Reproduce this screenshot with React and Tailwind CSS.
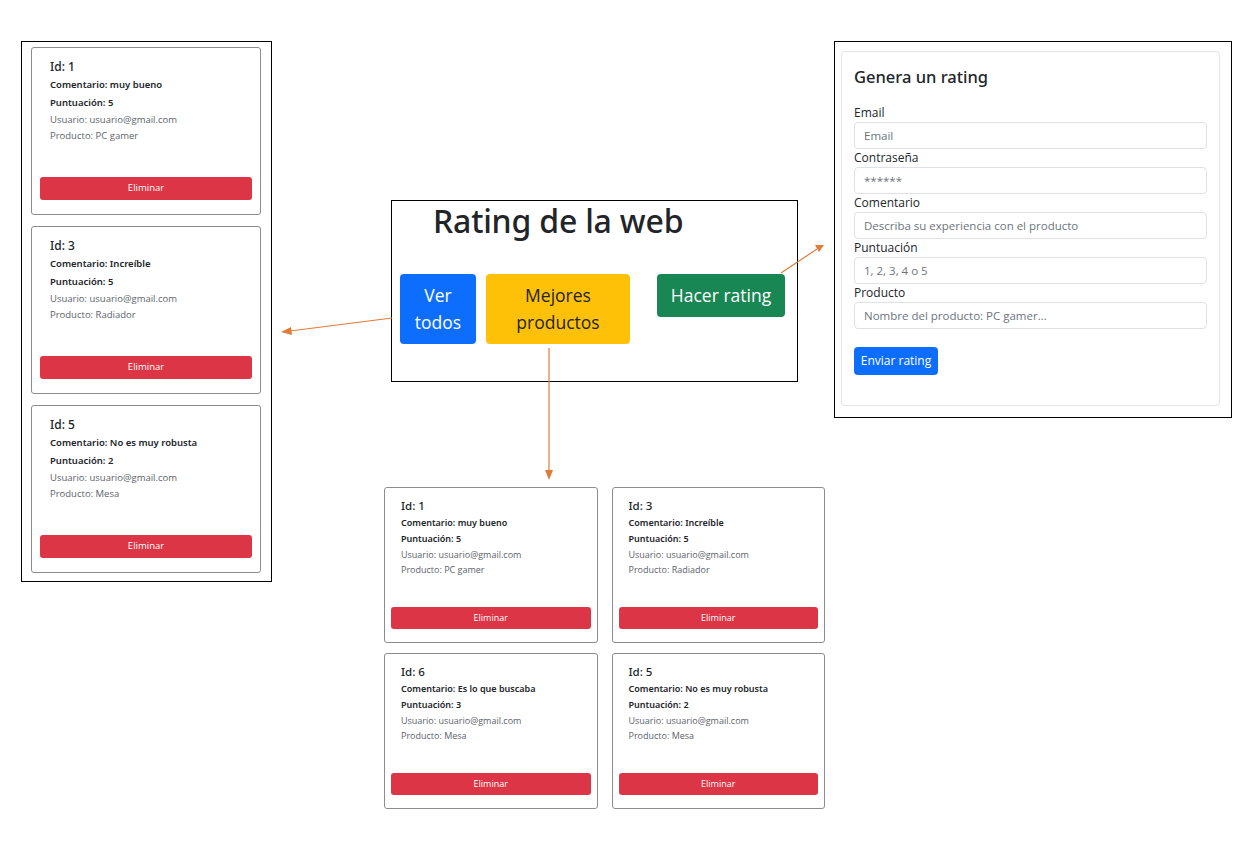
import React from 'react';

const leftRatings = [
  { id: 1, comentario: 'muy bueno', puntuacion: 5, producto: 'PC gamer' },
  { id: 3, comentario: 'Increíble', puntuacion: 5, producto: 'Radiador' },
  { id: 5, comentario: 'No es muy robusta', puntuacion: 2, producto: 'Mesa' },
];

const bestRatings = [
  { id: 1, comentario: 'muy bueno', puntuacion: 5, producto: 'PC gamer' },
  { id: 3, comentario: 'Increíble', puntuacion: 5, producto: 'Radiador' },
  { id: 6, comentario: 'Es lo que buscaba', puntuacion: 3, producto: 'Mesa' },
  { id: 5, comentario: 'No es muy robusta', puntuacion: 2, producto: 'Mesa' },
];

const noto = { fontFamily: '"Noto Sans", "Open Sans", sans-serif' };

function RatingCardLarge({ r }) {
  return (
    <div className="w-[230px] h-[168px] border border-[#8c8c8c] rounded-[3px] bg-white flex flex-col justify-between pb-[14px]">
      <div className="pt-[10px] pl-[18px] text-[#212529]">
        <div className="h-[18px] leading-[18px] text-[12px] font-medium" style={noto}>Id: {r.id}</div>
        <div className="h-[18px] leading-[18px] text-[9.5px] font-semibold" style={noto}>Comentario: {r.comentario}</div>
        <div className="h-[17px] leading-[17px] text-[9.5px] font-semibold" style={noto}>Puntuación: {r.puntuacion}</div>
        <div className="h-[17px] leading-[17px] text-[9.5px] text-[#5c636a]">Usuario: usuario@gmail.com</div>
        <div className="h-[15px] leading-[15px] text-[9.5px] text-[#5c636a]">Producto: {r.producto}</div>
      </div>
      <div className="px-[8px]">
        <div className="h-[23px] rounded-[3px] bg-[#dc3545] text-white text-[9.5px] flex items-center justify-center">Eliminar</div>
      </div>
    </div>
  );
}

function RatingCardSmall({ r }) {
  return (
    <div className="h-[156px] border border-[#8c8c8c] rounded-[3px] bg-white flex flex-col justify-between pb-[13px]">
      <div className="pt-[9px] pl-[16px] text-[#212529]">
        <div className="h-[18px] leading-[18px] text-[11.5px] font-medium" style={noto}>Id: {r.id}</div>
        <div className="h-[16px] leading-[16px] text-[9px] font-semibold" style={noto}>Comentario: {r.comentario}</div>
        <div className="h-[15px] leading-[15px] text-[9px] font-semibold" style={noto}>Puntuación: {r.puntuacion}</div>
        <div className="h-[17px] leading-[17px] text-[9px] text-[#5c636a]">Usuario: usuario@gmail.com</div>
        <div className="h-[14px] leading-[14px] text-[9px] text-[#5c636a]">Producto: {r.producto}</div>
      </div>
      <div className="px-[6px]">
        <div className="h-[22px] rounded-[3px] bg-[#dc3545] text-white text-[9px] flex items-center justify-center">Eliminar</div>
      </div>
    </div>
  );
}

function Field({ label, placeholder }) {
  return (
    <div>
      <div className="h-[18px] leading-[18px] text-[12px] text-[#212529]">{label}</div>
      <div className="h-[27px] border border-[#dee2e6] rounded-[4px] pl-[9px] flex items-center text-[11.5px] text-[#6c757d]">{placeholder}</div>
    </div>
  );
}

function Arrows() {
  const c = '#e07b39';
  return (
    <svg className="absolute inset-0 pointer-events-none" width="1255" height="842">
      <line x1="392" y1="318" x2="290" y2="331" stroke={c} strokeWidth="1.2" />
      <polygon points="281,332 291,327 292,335" fill={c} />
      <line x1="549" y1="348" x2="549" y2="471" stroke={c} strokeWidth="1.2" />
      <polygon points="549,480 545,470 553,470" fill={c} />
      <line x1="781" y1="273" x2="817" y2="249" stroke={c} strokeWidth="1.2" />
      <polygon points="824,245 815,245 819,252" fill={c} />
    </svg>
  );
}

export default function App() {
  return (
    <div className="relative w-[1255px] h-[842px] bg-white overflow-hidden" style={{ fontFamily: '"Open Sans", "Noto Sans", sans-serif' }}>
      {/* Ver todos */}
      <div className="absolute left-[21px] top-[41px] w-[251px] h-[541px] border border-black px-[9px] pt-[5px] flex flex-col gap-[11px]">
        {leftRatings.map((r) => (
          <RatingCardLarge key={r.id} r={r} />
        ))}
      </div>

      {/* Home */}
      <div className="absolute left-[391px] top-[200px] w-[407px] h-[182px] border border-black">
        <h1 className="pl-[41px] h-[41px] leading-[40px] text-[32px] font-medium tracking-[-0.2px] text-[#212529]" style={noto}>Rating de la web</h1>
        <div className="flex items-start mt-[32px] pl-[8px] text-[17.5px]">
          <div className="w-[76px] h-[70px] rounded-[4px] bg-[#0d6efd] text-white flex flex-col items-center justify-center leading-[27px] text-center">
            <span>Ver</span>
            <span>todos</span>
          </div>
          <div className="ml-[10px] w-[144px] h-[70px] rounded-[4px] bg-[#ffc107] text-[#212529] flex flex-col items-center justify-center leading-[27px] text-center">
            <span>Mejores</span>
            <span>productos</span>
          </div>
          <div className="ml-[27px] w-[128px] h-[43px] rounded-[4px] bg-[#198754] text-white flex items-center justify-center">Hacer rating</div>
        </div>
      </div>

      {/* Hacer rating */}
      <div className="absolute left-[834px] top-[41px] w-[398px] h-[377px] border border-black pl-[6px] pt-[9px]">
        <div className="w-[379px] h-[355px] border border-[#e3e6ea] rounded-[4px] px-[12px] pt-[13px]">
          <h2 className="h-[24px] leading-[24px] text-[16.5px] font-medium text-[#212529] mb-[15px]" style={noto}>Genera un rating</h2>
          <div className="flex flex-col">
            <Field label="Email" placeholder="Email" />
            <Field label="Contraseña" placeholder="******" />
            <Field label="Comentario" placeholder="Describa su experiencia con el producto" />
            <Field label="Puntuación" placeholder="1, 2, 3, 4 o 5" />
            <Field label="Producto" placeholder="Nombre del producto: PC gamer..." />
          </div>
          <div className="mt-[18px] w-[84px] h-[28px] rounded-[4px] bg-[#0d6efd] text-white text-[12px] flex items-center justify-center">Enviar rating</div>
        </div>
      </div>

      {/* Mejores productos */}
      <div className="absolute left-[384px] top-[487px] w-[441px] grid grid-cols-2 gap-x-[14px] gap-y-[10px]">
        {bestRatings.map((r) => (
          <RatingCardSmall key={r.id} r={r} />
        ))}
      </div>

      <Arrows />
    </div>
  );
}
